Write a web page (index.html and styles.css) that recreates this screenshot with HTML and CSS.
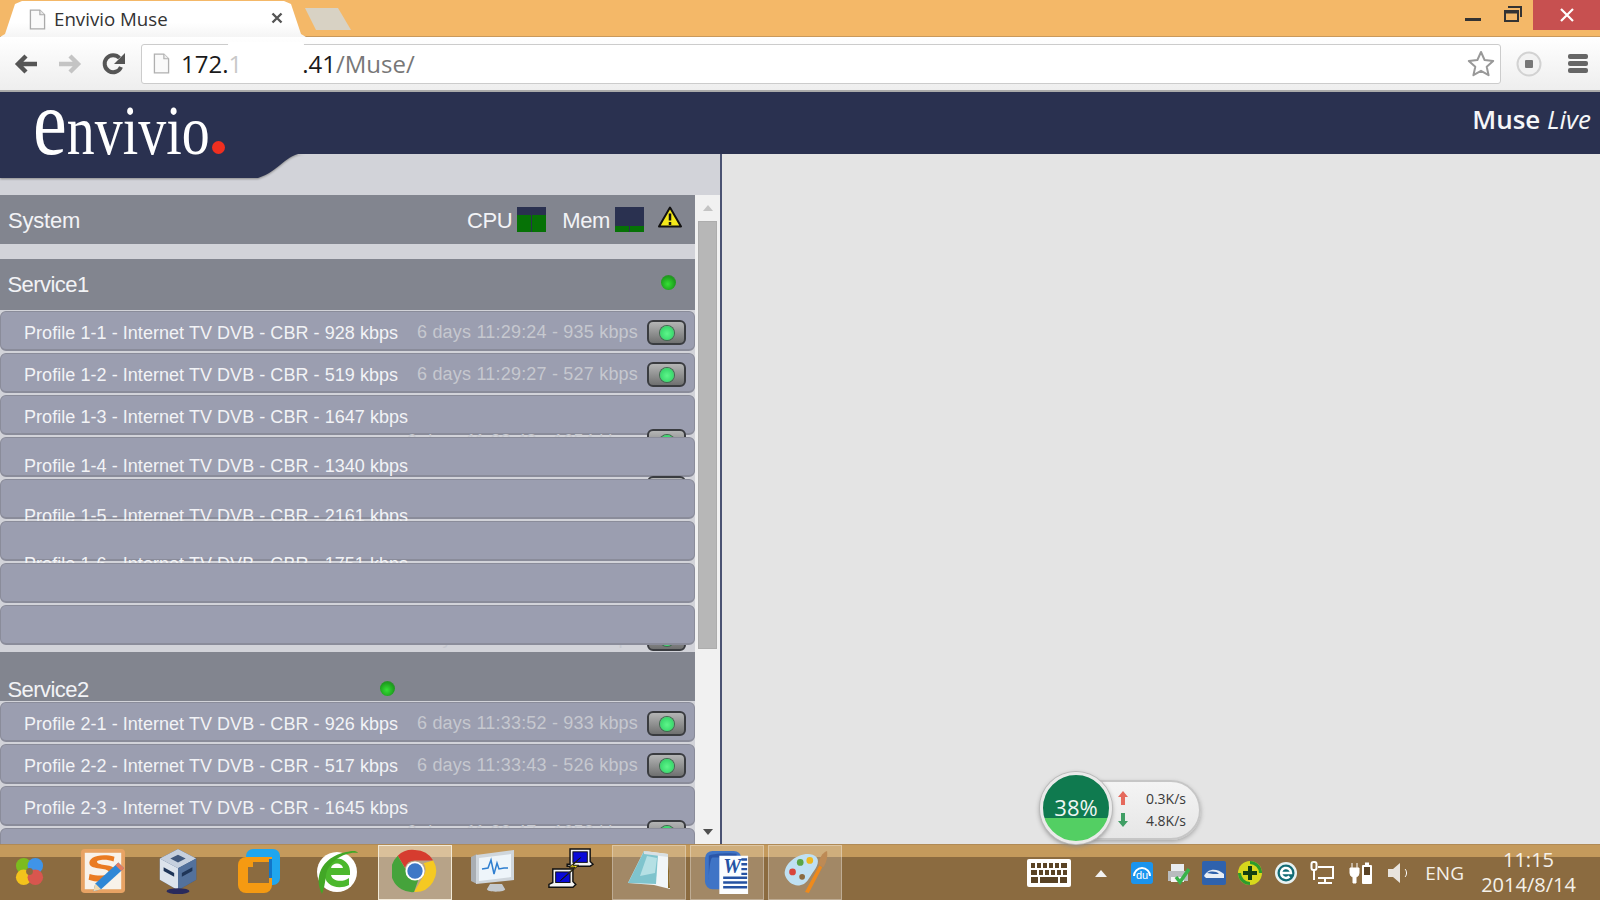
FILE: index.html
```html
<!DOCTYPE html>
<html lang="en">
<head>
<meta charset="utf-8">
<title>Envivio Muse</title>
<link rel="stylesheet" href="styles.css">
</head>
<body>
<div class="titlebar">
  <div class="tab">
    <svg class="favicon" viewBox="0 0 18 22"><path d="M1.5 1h10l5 5v15h-15z" fill="#fafafa" stroke="#aaa" stroke-width="1.4"/><path d="M11.5 1v5h5" fill="#e8e8e8" stroke="#aaa" stroke-width="1.2"/></svg>
    <span class="tab-title">Envivio Muse</span>
    <svg class="tab-close" viewBox="0 0 12 12"><path d="M1.5 1.5l9 9M10.5 1.5l-9 9" stroke="#555" stroke-width="2.4"/></svg>
  </div>
  <div class="newtab"></div>
  <div class="winctl">
    <svg class="win-min" viewBox="0 0 16 3"><rect width="16" height="3" fill="#333"/></svg>
    <svg class="win-max" viewBox="0 0 18 16"><path d="M4 1h13v10M1 5h13v10H1z M1 6.5h13" fill="none" stroke="#333" stroke-width="2"/></svg>
    <div class="win-close"><svg viewBox="0 0 14 14" class="win-x"><path d="M1 1l12 12M13 1L1 13" stroke="#fff" stroke-width="2.2"/></svg></div>
  </div>
</div>
<div class="toolbar">
  <svg class="nav" viewBox="0 0 24 20"><path d="M23 10H6M12 2l-8 8 8 8" fill="none" stroke="#555" stroke-width="4.4"/></svg>
  <svg class="nav" viewBox="0 0 24 20"><path d="M1 10h17M12 2l8 8-8 8" fill="none" stroke="#c4c4c4" stroke-width="4.4"/></svg>
  <svg class="nav nav-reload" viewBox="0 0 24 24"><path d="M19 15a8.5 8.5 0 1 1-1.5-9" fill="none" stroke="#555" stroke-width="4"/><path d="M23 1v11H12z" fill="#555"/></svg>
  <div class="omnibox">
    <svg class="page" viewBox="0 0 18 22"><path d="M1.5 1h10l5 5v15h-15z" fill="#fafafa" stroke="#b0b0b0" stroke-width="1.4"/><path d="M11.5 1v5h5" fill="#eee" stroke="#b0b0b0" stroke-width="1.2"/></svg>
    <span class="url">172.<span class="url-fade">1</span><span class="url-gap"></span>.41<span class="url-path">/Muse/</span></span>
    <svg class="star" viewBox="0 0 28 27"><path d="M14 2l3.6 8 8.6.9-6.5 5.8 1.9 8.5L14 20.800l-7.600 4.400 1.900-8.500L1.800 10.900l8.600-.9z" fill="#fff" stroke="#999" stroke-width="2" stroke-linejoin="round"/></svg>
  </div>
  <svg class="rec" viewBox="0 0 26 26"><circle cx="13" cy="13" r="11.500" fill="#f2f2f2" stroke="#d2d2d2" stroke-width="2"/><rect x="9" y="9" width="8" height="8" rx="1" fill="#777"/></svg>
  <div class="menu"><i></i><i></i><i></i></div>
</div>
<div class="app">
  <header class="app-header">
    <div class="logo"><span class="logo-word"><span class="logo-e">e</span>nvivio</span><i class="logo-dot"></i></div>
    <div class="brand">Muse <em>Live</em></div>
  </header>
  <svg class="logo-tail" viewBox="0 0 305 25" preserveAspectRatio="none"><path d="M0 0H305C285 1 280 18 258 25H0z" fill="#2a3150"/></svg>
  <main class="main">
    <section class="left">
      <div class="list">
        <div class="sysbar">
          <span class="bar-title">System</span>
          <span class="sys-label">CPU</span>
          <span class="meter"><i class="m-cpu"></i><i class="m-cpu"></i></span>
          <span class="sys-label sys-mem">Mem</span>
          <span class="meter"><i class="m-mem"></i><i class="m-mem"></i></span>
          <svg class="warn" viewBox="0 0 24 22"><path d="M12 1.500L23 20.500H1z" fill="#f4e91a" stroke="#111" stroke-width="2" stroke-linejoin="round"/><path d="M12 7.500v7M12 16v3" stroke="#111" stroke-width="2.500"/></svg>
        </div>
        <div class="svc">
          <span class="bar-title svc-title">Service1</span>
          <i class="dot"></i>
        </div>
        <div class="rows">
          <div class="row"><span class="label">Profile 1-1 - Internet TV DVB - CBR - 928 kbps</span><span class="status">6 days 11:29:24 - 935 kbps</span><span class="btn"><i></i></span></div>
          <div class="row"><span class="label">Profile 1-2 - Internet TV DVB - CBR - 519 kbps</span><span class="status">6 days 11:29:27 - 527 kbps</span><span class="btn"><i></i></span></div>
          <div class="row"><span class="label label-wrap">Profile 1-3 - Internet TV DVB - CBR - 1647 kbps</span><span class="status">6 days 11:28:48 - 1654 kbps</span><span class="btn"><i></i></span></div>
          <div class="row row-d1"><span class="label label-wrap">Profile 1-4 - Internet TV DVB - CBR - 1340 kbps</span><span class="status">6 days 11:28:40 - 1347 kbps</span><span class="btn"><i></i></span></div>
          <div class="row row-d2"><span class="label label-wrap">Profile 1-5 - Internet TV DVB - CBR - 2161 kbps</span><span class="status">6 days 11:28:31 - 2168 kbps</span><span class="btn"><i></i></span></div>
          <div class="row row-d3"><span class="label label-wrap">Profile 1-6 - Internet TV DVB - CBR - 1751 kbps</span><span class="status">6 days 11:28:22 - 1758 kbps</span><span class="btn"><i></i></span></div>
          <div class="row row-d4"><span class="label label-wrap">Profile 1-7 - Internet TV DVB - CBR - 1751 kbps</span><span class="status">6 days 11:28:14 - 1758 kbps</span><span class="btn"><i></i></span></div>
          <div class="row"></div>
        </div>
        <div class="svc svc-2">
          <span class="bar-title svc-title svc-title-2">Service2</span>
          <i class="dot dot-2"></i>
        </div>
        <div class="rows-2">
          <div class="row"><span class="label">Profile 2-1 - Internet TV DVB - CBR - 926 kbps</span><span class="status">6 days 11:33:52 - 933 kbps</span><span class="btn"><i></i></span></div>
          <div class="row"><span class="label">Profile 2-2 - Internet TV DVB - CBR - 517 kbps</span><span class="status">6 days 11:33:43 - 526 kbps</span><span class="btn"><i></i></span></div>
          <div class="row"><span class="label label-wrap">Profile 2-3 - Internet TV DVB - CBR - 1645 kbps</span><span class="status">6 days 11:33:47 - 1652 kbps</span><span class="btn"><i></i></span></div>
          <div class="row"></div>
        </div>
      </div>
      <div class="scroll">
        <i class="arrow-up"></i>
        <div class="thumb"></div>
        <i class="arrow-down"></i>
      </div>
    </section>
    <section class="right"></section>
  </main>
</div>
<div class="smudge"></div>
<div class="netmeter">
  <div class="net-pill">
    <div class="net-line"><svg class="net-arrow" viewBox="0 0 10 14"><path d="M5 0l5 6H7v8H3V6H0z" fill="#e5695c"/></svg><span>0.3K/s</span></div>
    <div class="net-line"><svg class="net-arrow" viewBox="0 0 10 14"><path d="M5 14L0 8h3V0h4v8h3z" fill="#3f9e64"/></svg><span>4.8K/s</span></div>
  </div>
  <div class="net-ball"><span>38%</span></div>
</div>
<footer class="taskbar">
  <div class="start">
    <svg viewBox="0 0 32 32" class="ico-start"><circle cx="10" cy="10" r="8" fill="#7cbc1e"/><circle cx="22" cy="10" r="8" fill="#3f94e8"/><circle cx="10" cy="22" r="8" fill="#f3c31c"/><circle cx="22" cy="22" r="8" fill="#d8564e"/><circle cx="16" cy="16" r="3.500" fill="#8b6b40"/></svg>
  </div>
  <div class="slot">
    <svg viewBox="0 0 48 48" class="ico"><rect x="1" y="1" width="46" height="46" rx="4" fill="#e8a364"/><rect x="5" y="5" width="38" height="38" fill="#f8f2ea"/><path d="M36 9C20 5 8 10 10 17c2 6 19 3 20 8 1 4-10 5-20 2l-1 6c12 4 26 2 28-8C38 16 21 19 18 15c-2-3 10-4 17-1z" fill="#ea7b22"/><path d="M40 15l6 6-24 22-8 2 2-8z" fill="#2f87d6"/><path d="M16 37l6 6-8 2z" fill="#f2d9ae"/><path d="M40 15l6 6-3 3-6-6z" fill="#e67c5e"/></svg>
  </div>
  <div class="slot">
    <svg viewBox="0 0 42 48" class="ico ico-vbox"><path d="M21 1l19 10v22L21 44 2 33V11z" fill="#38557f"/><path d="M21 1l19 10-19 10L2 11z" fill="#c6d0de"/><path d="M21 7l8 4-8 4-8-4z" fill="#40587c"/><path d="M2 11l19 10v23L2 33z" fill="#dce3ec"/><path d="M40 11L21 21v23l19-11z" fill="#53719c"/><path d="M6 20l11 6v4L6 24zM25 26l11-6v4l-11 6z" fill="#1f3558"/><ellipse cx="21" cy="45" rx="12" ry="3" fill="#2a2a5c"/></svg>
  </div>
  <div class="slot">
    <svg viewBox="0 0 44 46" class="ico"><rect x="9" y="1" width="34" height="36" rx="7" fill="#1fa6ee"/><rect x="1" y="9" width="34" height="36" rx="8" fill="#f59a12"/><rect x="11" y="19" width="21" height="16" fill="#8b6b40"/><path d="M32 19h3v16h-3zM11 9h24v10H21a10 10 0 0 0-10-4z" fill="#f59a12"/><rect x="16" y="14" width="16" height="16" fill="#8b6b40"/><path d="M32 11h3v19h-3z" fill="#1276c8"/></svg>
  </div>
  <div class="slot">
    <svg viewBox="0 0 46 46" class="ico"><circle cx="23" cy="24" r="20" fill="#fff"/><path d="M10 24a13 13 0 0 1 26-1v4H17c1 6 11 8 18 3v7c-10 5-25 2-25-13zM17 20h12c-1-6-11-6-12 0z" fill="#4cb82d"/><path d="M8 46C0 30 6 10 32 4c6-1 10-2 12 1-12-2-30 8-32 22-1 8-2 14-4 19z" fill="#42a726"/></svg>
  </div>
  <div class="slot slot-active">
    <svg viewBox="0 0 48 48" class="ico"><path d="M24 2a22 22 0 0 1 19 11H24a11 11 0 0 0-10.500 7.700L6 8a22 22 0 0 1 18-6z" fill="#d63c2f"/><path d="M43 13a22 22 0 0 1-20 33l9.500-16.500A11 11 0 0 0 33 16z" fill="#f5c922"/><path d="M6 8l9.500 16.500a10 10 0 0 0 12 8.500L23 46A22 22 0 0 1 6 8z" fill="#45a33b"/><circle cx="24" cy="24" r="10" fill="#fff"/><circle cx="24" cy="24" r="8" fill="#3e78c6"/></svg>
  </div>
  <div class="slot">
    <svg viewBox="0 0 46 46" class="ico"><path d="M1 9l6-3v30l-6-3z" fill="#a9aeb3"/><path d="M6 7L44 2v30L6 36z" fill="#cfd6dc"/><path d="M9 10l32-4v23L9 33z" fill="#eef5fa"/><path d="M12 21l6-1 3-8 3 14 3-11 2 6 5-1 4 0" fill="none" stroke="#2f7fd0" stroke-width="1.500"/><path d="M20 36h12l3 5c2 3-18 4-18 0z" fill="#c4c9cd"/></svg>
  </div>
  <div class="slot">
    <svg viewBox="0 0 48 48" class="ico"><path d="M23 1h21v13l3 3-3 2H20v-2h3z" fill="#f4f4f4" stroke="#111" stroke-width="1.500"/><rect x="26" y="4" width="15" height="11" fill="#0a0ad8" stroke="#111"/><path d="M5 22h21v13l3 3-3 3H1v-3l4-2z" fill="#f4f4f4" stroke="#111" stroke-width="1.500"/><rect x="8" y="25" width="15" height="11" fill="#0a0ad8" stroke="#111"/><path d="M34 10L22 20h6L13 34l19-16h-6l8-8z" fill="#ffe81a" stroke="#111"/></svg>
  </div>
  <div class="slot slot-open">
    <svg viewBox="0 0 46 46" class="ico"><path d="M18 3l24 3 2 35-16-4-26-2z" fill="#f1f6f8"/><path d="M18 3l14 3-2 30-28-1z" fill="#7fc4cd"/><path d="M21 8l10 2-2 15-15 3z" fill="#b5e0e4"/><path d="M18 3l24 3v3l-24-3z" fill="#d8e0e4"/><path d="M42 6l2 34-2 0z" fill="#8a6a2a"/></svg>
  </div>
  <div class="slot slot-open">
    <svg viewBox="0 0 48 48" class="ico"><rect x="1" y="3" width="38" height="40" rx="8" fill="#3f74c6"/><path d="M5 8c6-3 25-3 29-2v4H9C6 10 5 30 5 33z" fill="#2b56a8"/><path d="M16 8h30v40H16z" fill="#fbfdff"/><text x="20" y="26" class="word-w">W</text><path d="M39 12h6M39 17h6M39 22h6M39 27h6M20 31h25M20 36h25M20 41h25" stroke="#2552a3" stroke-width="2.500"/></svg>
  </div>
  <div class="slot slot-open">
    <svg viewBox="0 0 48 48" class="ico"><path d="M3 28C1 15 20 3 32 7c8 3 6 10 2 16-7 10-8 15-16 16-6 1-13-4-15-11z" fill="#bfe0f2"/><circle cx="11" cy="25" r="3.500" fill="#d8453c"/><circle cx="19" cy="15" r="3.500" fill="#5ba545"/><circle cx="29" cy="13" r="3.500" fill="#eeb820"/><circle cx="21" cy="30" r="3" fill="#8b6b40"/><path d="M24 46l15-28 3 2-14 27z" fill="#ee8a1c"/><path d="M38 17c1-7 4-12 9-14 1 6-1 13-4 17z" fill="#bd8a55"/></svg>
  </div>
  <div class="tray">
    <svg class="tray-kbd" viewBox="0 0 46 30"><rect x="1" y="1" width="44" height="28" rx="2" fill="#fff"/><g fill="#5a4325"><rect x="5" y="5" width="4" height="5"/><rect x="11" y="5" width="4" height="5"/><rect x="17" y="5" width="4" height="5"/><rect x="23" y="5" width="4" height="5"/><rect x="29" y="5" width="4" height="5"/><rect x="35" y="5" width="6" height="5"/><rect x="5" y="12" width="6" height="5"/><rect x="13" y="12" width="4" height="5"/><rect x="19" y="12" width="4" height="5"/><rect x="25" y="12" width="4" height="5"/><rect x="31" y="12" width="4" height="5"/><rect x="37" y="12" width="4" height="5"/><rect x="5" y="19" width="7" height="6"/><rect x="14" y="19" width="18" height="6"/><rect x="34" y="19" width="7" height="6"/></g></svg>
    <i class="tray-up"></i>
    <div class="tray-icons">
      <span class="tcell"><svg viewBox="0 0 24 24"><rect x="1" y="1" width="22" height="22" rx="3" fill="#1a94ee"/><path d="M4 15a8 8 0 0 1 16 0" fill="none" stroke="#fff" stroke-width="2"/><text x="12" y="18" class="du">du</text></svg></span>
      <span class="tcell"><svg viewBox="0 0 24 24"><rect x="2" y="10" width="20" height="10" fill="#b9bcbf"/><path d="M5 3h13v7H5z" fill="#e9ecef"/><rect x="5" y="16" width="13" height="5" fill="#f5f5f5"/><path d="M10 16l4 5 9-13" fill="none" stroke="#38b34a" stroke-width="3.500"/></svg></span>
      <span class="tcell"><svg viewBox="0 0 24 24"><rect width="24" height="24" rx="2" fill="#2f62ad"/><path d="M2 15c4-8 13-8 20-2v4H4z" fill="#e8eef6"/><path d="M5 12c4-2 9-2 12 1-4 0-8 0-12-1z" fill="#2f62ad"/></svg></span>
      <span class="tcell"><svg viewBox="0 0 24 24"><circle cx="12" cy="12" r="12" fill="#d8d81c"/><path d="M12 0a12 12 0 0 1 12 12h-3A9 9 0 0 0 12 3zM12 24A12 12 0 0 1 0 12h3a9 9 0 0 0 9 9z" fill="#2d9c2d"/><path d="M10 5h4v5h5v4h-5v5h-4v-5H5v-4h5z" fill="#123f12"/></svg></span>
      <span class="tcell"><svg viewBox="0 0 24 24"><circle cx="12" cy="12" r="11" fill="#e8f2f2"/><circle cx="12" cy="12" r="8.500" fill="#116b74"/><path d="M7 12h10a5 5 0 1 0-1.500 3.500" fill="none" stroke="#fff" stroke-width="2.500"/></svg></span>
      <span class="tcell"><svg viewBox="0 0 24 24" fill="none" stroke="#fff" stroke-width="2"><rect x="1.500" y="1" width="5" height="8" rx="2"/><path d="M4 9v10M8 6h15v11H8M15 17v4M8 22h14"/></svg></span>
      <span class="tcell tcell-batt"><svg viewBox="0 0 24 24"><path d="M3 2v5M8 2v5M1 7h9v5a4 4 0 0 1-3 4v6H4v-6a4 4 0 0 1-3-4z" fill="#fff" stroke="#fff" stroke-width="1"/><rect x="13" y="4" width="10" height="19" rx="1" fill="#fff"/><rect x="16" y="1.500" width="4" height="3" fill="#fff"/><rect x="15" y="6" width="6" height="8" fill="#5a4325"/></svg></span>
      <span class="tcell tcell-vol"><svg viewBox="0 0 24 24"><path d="M1 8h5l7-6v20l-7-6H1z" fill="#e8e4de"/><path d="M18 8c2 2 2 6 0 8" fill="none" stroke="#fff" stroke-width="1"/></svg></span>
    </div>
    <span class="eng">ENG</span>
    <div class="clock"><span>11:15</span><span>2014/8/14</span></div>
  </div>
</footer>
</body>
</html>
```
FILE: styles.css
```css
* { box-sizing: border-box; }
html, body { margin: 0; height: 100%; }
body {
  width: 1600px; height: 900px; overflow: hidden; position: relative;
  display: flex; flex-direction: column;
  font-family: "Liberation Sans", Arial, sans-serif;
  background: #e4e4e4;
}
i { display: block; }

/* Title bar */
.titlebar {
  height: 37px; flex: none; display: flex; align-items: flex-end;
  background: #f4b868; border-bottom: 1px solid #c9995c;
}
.tab {
  width: 306px; height: 36px; margin-bottom: -1px; padding-left: 29px;
  display: flex; align-items: center;
  background: linear-gradient(#fff 60%, #f5f5f5);
  clip-path: polygon(0 100%, 5px 92%, 15px 8%, 22px 0, 284px 0, 291px 8%, 301px 92%, 306px 100%);
}
.favicon { width: 17px; height: 21px; flex: none; }
.tab-title { margin-left: 8px; font: 18.7px "Open Sans", sans-serif; color: #333; width: 217px; margin-top: -2px; }
.tab-close { width: 12px; height: 12px; flex: none; margin-top: -2px; }
.newtab {
  width: 46px; height: 22px; margin: 0 0 6px -1px; background: #d8d2c4;
  clip-path: polygon(0 0, 33px 0, 46px 100%, 11px 100%);
}
.winctl { margin-left: auto; align-self: flex-start; display: flex; align-items: flex-start; height: 30px; }
.win-min { width: 16px; height: 3px; margin-top: 18px; }
.win-max { width: 18px; height: 16px; margin: 6px 11px 0 23px; }
.win-close { width: 67px; height: 30px; background: #c75050; display: flex; align-items: center; justify-content: center; }
.win-x { width: 14px; height: 14px; }

/* Toolbar */
.toolbar {
  height: 55px; flex: none; display: flex; align-items: center; padding-left: 14px;
  background: linear-gradient(#fff, #eee); border-bottom: 2px solid #aaa;
}
.nav { width: 24px; height: 20px; margin-right: 20px; flex: none; }
.nav-reload { height: 24px; margin-right: 15px; }
.omnibox {
  width: 1360px; height: 40px; display: flex; align-items: center; padding-left: 11px;
  background: #fff; border: 1px solid #ccc; border-radius: 3px;
}
.page { width: 17px; height: 21px; flex: none; }
.url { margin-left: 11px; font: 24px "Open Sans", sans-serif; color: #1a1a1a; white-space: nowrap; }
.url-fade { color: #c8c8c8; }
.url-gap { display: inline-block; width: 60px; }
.url-path { color: #777; }
.star { width: 28px; height: 27px; margin-left: auto; margin-right: 5px; }
.rec { width: 26px; height: 26px; margin-left: 15px; flex: none; }
.menu { width: 20px; margin-left: 26px; display: flex; flex-direction: column; gap: 2px; }
.menu i { height: 5px; background: #666; border-radius: 2px; }
.smudge { position: absolute; left: 228px; top: 42px; width: 76px; height: 6px; background: #fff; border-radius: 3px; }

/* App */
.app { flex: 1; min-height: 0; display: flex; flex-direction: column; position: relative; }
.app-header {
  height: 62px; flex: none; position: relative; z-index: 3;
  display: flex; justify-content: space-between; align-items: flex-start;
  background: #2a3150;
}
.logo { position: relative; width: 240px; height: 62px; }
.logo-word {
  position: absolute; left: 33px; top: -6px; color: #fff; white-space: nowrap;
  font: 69px/72px "Liberation Serif", serif; transform: scaleX(.81); transform-origin: left top;
}
.logo-e { font-size: 94px; line-height: 72px; }
.logo-dot { position: absolute; left: 212px; top: 49px; width: 13px; height: 13px; border-radius: 50%; background: #ef2f20; }
.brand { margin: 9px 9px 0 0; font: 600 26px "Open Sans", sans-serif; color: #f5f6f8; }
.brand em { font-weight: 400; }
.logo-tail { position: absolute; left: 0; top: 61px; width: 305px; height: 25px; z-index: 2; filter: drop-shadow(0 1px 1px #888); }

.main { flex: 1; min-height: 0; display: flex; border-top: 1px solid #888; margin-top: -1px; position: relative; }
.left {
  width: 722px; flex: none; padding-top: 40px; display: flex;
  background: #d2d3d9; border-right: 2px solid #4a5272; overflow: hidden;
}
.list { width: 695px; flex: none; color: #f2f3f6; margin-top: 1px; }
.right { flex: 1; background: #e4e4e4; }

.sysbar {
  height: 49px; display: flex; align-items: center; padding: 0 13px 0 8px;
  background: #82858f;
}
.bar-title { font-size: 22px; letter-spacing: -.2px; }
.sysbar .bar-title, .sys-label { padding-top: 2px; }
.svc-title { letter-spacing: -.55px; margin-left: -.5px; }
.sys-label { margin-left: auto; font-size: 22px; letter-spacing: -.4px; margin-right: 5px; }
.sys-mem { margin-left: 16px; }
.meter { width: 29px; height: 25px; background: #2a3150; display: flex; gap: 1px; align-items: flex-end; flex: none; }
.meter i { flex: 1; background: #067206; }
.m-cpu { height: 17px; }
.m-mem { height: 6px; }
.warn { width: 24px; height: 24px; margin-left: 14px; margin-top: -6px; flex: none; }

.svc {
  height: 51px; margin-top: 15px; padding: 0 19px 0 8px;
  display: flex; align-items: center; justify-content: space-between;
  background: #82858f; position: relative;
}
.dot {
  width: 15px; height: 15px; border-radius: 50%; margin-top: -4px;
  background: radial-gradient(circle at 45% 60%, #35e035, #1d9e1d 60%, #556b55 100%);
}
.svc-2 { height: 49px; margin-top: 0; justify-content: flex-start; align-items: flex-end; }
.svc-title-2 { margin-bottom: -2px; }
.dot-2 { margin: 0 0 5px 291px; }
.rows { height: 342px; padding-top: 1px; overflow: hidden; }
.rows-2 { padding-top: 1px; }

.row {
  height: 40px; margin-bottom: 2px; padding: 8px 8px 0 23px; position: relative;
  display: flex; flex-wrap: wrap; align-items: center; align-content: flex-start;
  background: #9b9eb0; border: 1px solid #8a8c9a; border-bottom-width: 2px;
  border-radius: 6px;
}
.row-d1 { padding-top: 15px; }
.row-d2 { padding-top: 23px; }
.row-d3 { padding-top: 29px; }
.row-d4 { padding-top: 37px; }
.label { height: 25px; font-size: 18px; line-height: 27px; letter-spacing: .05px; color: #f2f3f6; white-space: nowrap; }
.label-wrap { flex: 0 0 100%; }
.row-d1 .label { height: 23px; }
.status { margin-left: auto; font-size: 18px; line-height: 25px; letter-spacing: .2px; color: #c6c8cf; white-space: nowrap; }
.btn {
  width: 39px; height: 25px; margin-left: 9px; flex: none; display: flex; align-items: center; justify-content: center;
  background: linear-gradient(#b4b5b5, #6f7070); border: 2px solid #3a3c40; border-radius: 6px;
}
.btn i { width: 14px; height: 14px; border-radius: 50%; background: radial-gradient(circle at 50% 55%, #5ef58a, #27c95e); box-shadow: 0 0 0 1px #3f6a4e; }

.scroll { width: 25px; flex: none; background: #f1f1f1; padding: 0 3px; display: flex; flex-direction: column; align-items: center; margin-top: 1px; }
.arrow-up { width: 0; height: 0; margin-top: 10px; border: 5px solid transparent; border-top: 0; border-bottom: 6px solid #c4c4c4; }
.thumb { width: 19px; height: 428px; margin-top: 10px; background: #b7b7b7; border: 1px solid #adadad; }
.arrow-down { width: 0; height: 0; margin-top: 180px; border: 5px solid transparent; border-bottom: 0; border-top: 6px solid #505050; }

/* Net meter */
.netmeter { position: absolute; left: 1040px; top: 772px; width: 161px; height: 76px; z-index: 5; }
.net-pill {
  position: absolute; left: 30px; top: 8px; width: 131px; height: 60px; padding: 5px 13px 0 46px;
  background: linear-gradient(#f4f4f4, #e6e6e6); border: 2px solid #c6c6c6; border-radius: 30px; box-shadow: 0 2px 4px #aaa;
}
.net-line { display: flex; justify-content: space-between; align-items: center; height: 22px; font: 14px "Open Sans", sans-serif; color: #3a3a3a; }
.net-arrow { width: 10px; height: 14px; }
.net-ball {
  position: absolute; left: 0; top: 0; width: 72px; height: 72px; border-radius: 50%;
  display: flex; align-items: center; justify-content: center; padding-bottom: 2px;
  background: linear-gradient(#0f7a4f 0 65%, #53cf63 65%);
  border: 3px solid #eaeaea; box-shadow: 0 0 0 1px #bbb, 0 2px 5px #888;
  color: #eef6f2; font: 22px "Open Sans", sans-serif;
}

/* Taskbar */
.taskbar {
  height: 56px; flex: none; display: flex; align-items: stretch; position: relative; z-index: 4;
  background: linear-gradient(#c49a5c 0 12px, #8b6b40 12px);
  border-top: 1px solid #b08a55;
}
.start { width: 66px; padding-left: 14px; display: flex; align-items: center; padding-bottom: 2px; }
.ico-start { width: 31px; height: 31px; }
.slot { width: 74px; margin-right: 4px; display: flex; align-items: center; justify-content: center; padding-bottom: 3px; }
.ico { width: 46px; height: 46px; }
.ico-vbox { margin-right: 6px; }
.slot-active { background: rgba(255,255,255,.38); border: 1px solid #f2ead8; }
.slot-open { background: rgba(255,255,255,.2); border: 1px solid rgba(255,255,255,.3); }
.word-w { font: italic bold 21px "Liberation Serif", serif; fill: #2552a3; }
.du { font: 11px "Liberation Sans", sans-serif; fill: #fff; text-anchor: middle; }

.tray { margin-left: auto; padding: 1px 25px 0 0; display: flex; align-items: center; color: #f5f1ea; }
.tray-kbd { width: 46px; height: 30px; flex: none; }
.tray-up { width: 0; height: 0; margin: 0 17px 0 23px; border: 6px solid transparent; border-top: 0; border-bottom: 7px solid #f2f2f2; }
.tray-icons { display: flex; }
.tcell { width: 36px; display: flex; justify-content: center; }
.tcell svg { width: 24px; height: 24px; }
.tcell-batt { margin-left: 3px; }
.tcell-vol { margin-left: 2px; }
.eng { margin-left: 8px; font: 19px "Open Sans", sans-serif; }
.clock { margin-left: 18px; width: 93px; margin-top: -1px; display: flex; flex-direction: column; align-items: center; font: 20px/24.5px "Open Sans", sans-serif; white-space: nowrap; }
```
